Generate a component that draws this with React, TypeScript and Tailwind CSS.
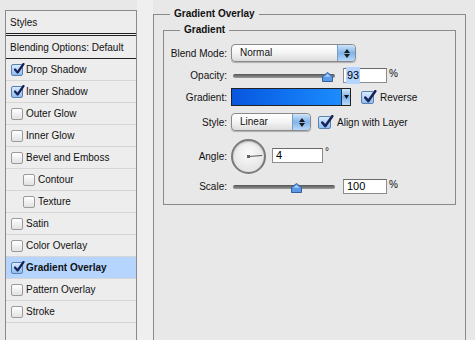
import React from 'react';

const font = { fontFamily: '"Liberation Sans", Arial, sans-serif' };

const CheckMark = ({ size = 12 }: { size?: number }) => (
  <svg width={size} height={size} viewBox="0 0 12 12" className="absolute left-[1px] -top-[2px]">
    <path d="M2 6.5 L4.6 9.5 L10.5 1" fill="none" stroke="#16225a" strokeWidth="2.2" strokeLinecap="round" strokeLinejoin="round" />
  </svg>
);

const Box = ({ checked, big }: { checked?: boolean; big?: boolean }) => (
  <span
    className={`relative shrink-0 rounded-[2px] border ${big ? 'w-[13px] h-[13px]' : 'w-[12px] h-[12px]'} ${
      checked ? 'border-[#5a7fb0] bg-gradient-to-b from-[#d9ebff] to-[#8fbdf0]' : 'border-[#9a9a9a] bg-gradient-to-b from-white to-[#e2e2e2]'
    }`}
  >
    {checked && <CheckMark size={big ? 14 : 12} />}
  </span>
);

const styleRows: { label: string; checked?: boolean; indent?: boolean; active?: boolean }[] = [
  { label: 'Drop Shadow', checked: true },
  { label: 'Inner Shadow', checked: true },
  { label: 'Outer Glow' },
  { label: 'Inner Glow' },
  { label: 'Bevel and Emboss' },
  { label: 'Contour', indent: true },
  { label: 'Texture', indent: true },
  { label: 'Satin' },
  { label: 'Color Overlay' },
  { label: 'Gradient Overlay', checked: true, active: true },
  { label: 'Pattern Overlay' },
  { label: 'Stroke' },
];

const Stepper = () => (
  <div className="w-[18px] h-full rounded-r-[4px] bg-gradient-to-b from-[#cfe4fb] via-[#7fb3ea] to-[#b9d9fa] border-l border-[#7a9cc4] flex flex-col items-center justify-center gap-[1px]">
    <svg width="6" height="4" viewBox="0 0 6 4"><path d="M3 0 L6 4 L0 4Z" fill="#1a1a1a" /></svg>
    <svg width="6" height="4" viewBox="0 0 6 4"><path d="M0 0 L6 0 L3 4Z" fill="#1a1a1a" /></svg>
  </div>
);

const Select = ({ value, width }: { value: string; width: string }) => (
  <div className={`${width} h-[18px] flex rounded-[4px] border border-[#8a8a8a] bg-gradient-to-b from-white via-[#f4f4f4] to-[#dcdcdc] shadow-[0_1px_1px_rgba(0,0,0,0.25)]`}>
    <span className="flex-1 pl-[8px] leading-[16px] text-[#111]">{value}</span>
    <Stepper />
  </div>
);

const Slider = ({ pos }: { pos: number }) => (
  <div className="relative w-[102px] h-[14px] flex items-center">
    <div className="w-full h-[4px] rounded-full bg-gradient-to-b from-[#555] to-[#9a9a9a]" />
    <svg width="11" height="10" viewBox="0 0 11 10" className="absolute top-[3px]" style={{ left: pos }}>
      <path d="M5.5 0.5 L10.5 4.5 L10.5 9.5 L0.5 9.5 L0.5 4.5 Z" fill="#5c9ae6" stroke="#2f5f9e" strokeWidth="1" strokeLinejoin="round" />
      <path d="M5.5 2 L8.5 4.8 L2.5 4.8 Z" fill="#a9d0ff" />
    </svg>
  </div>
);

const NumberField = ({ value, selected, width = 'w-[44px]' }: { value: string; selected?: boolean; width?: string }) => (
  <div className={`${width} h-[15px] bg-white border border-[#8c8c8c] border-t-[#6a6a6a] flex items-center pl-[2px] text-[11px] text-black`}>
    <span className={selected ? 'bg-[#b5d5ff] px-[1px]' : 'px-[1px]'}>{value}</span>
  </div>
);

const Row = ({ label, children, className = '' }: { label: string; children: React.ReactNode; className?: string }) => (
  <div className={`flex items-center ${className}`}>
    <span className="w-[67px] text-right pr-[4px] text-[#111]">{label}</span>
    {children}
  </div>
);

export default function App() {
  return (
    <div className="w-[475px] h-[340px] overflow-hidden bg-[#e8e8e8] flex text-[10px] text-[#111]" style={font}>
      {/* Styles list */}
      <div className="ml-[5px] mt-[10px] w-[132px] h-[340px] shrink-0 border border-[#8a8a8a] bg-[#ededed] flex flex-col">
        <div className="h-[25px] border-b-[3px] border-double border-[#222] pl-[4px] flex items-center">Styles</div>
        <div className="h-[23px] border-b border-[#222] pl-[4px] flex items-center">Blending Options: Default</div>
        {styleRows.map((row) => (
          <div
            key={row.label}
            className={`h-[22px] border-b border-[#d6d6d6] flex items-center gap-[3px] ${row.indent ? 'pl-[17px]' : 'pl-[5px]'} ${
              row.active ? 'bg-[#b5d5ff] font-bold' : ''
            }`}
          >
            <Box checked={row.checked} />
            <span>{row.label}</span>
          </div>
        ))}
      </div>

      <div className="w-[16px] shrink-0 bg-[#efefef]" />

      {/* Gradient Overlay group */}
      <fieldset className="mt-[8px] w-[313px] h-[345px] shrink-0 border border-[#8a8a8a] px-[9px]">
        <legend className="ml-[7px] px-[4px] font-bold leading-[12px]">Gradient Overlay</legend>
        <fieldset className="mt-[4px] border border-[#8a8a8a] pb-[10px]">
          <legend className="ml-[16px] px-[4px] font-bold leading-[12px]">Gradient</legend>
          <div className="flex flex-col pt-[8px]">
            <Row label="Blend Mode:">
              <Select value="Normal" width="w-[125px]" />
            </Row>
            <Row label="Opacity:" className="mt-[6px]">
              <div className="ml-[2px]">
                <Slider pos={89} />
              </div>
              <div className="ml-[8px]">
                <NumberField value="93" selected />
              </div>
              <span className="ml-[2px] -mt-[4px]">%</span>
            </Row>
            <Row label="Gradient:" className="mt-[5px]">
              <div className="w-[120px] h-[18px] border border-[#222] flex">
                <div className="flex-1 bg-gradient-to-r from-[#0a56df] to-[#1d8cff]" />
                <div className="w-[9px] bg-gradient-to-b from-[#cfe4fb] via-[#7fb3ea] to-[#b9d9fa] border-l border-[#333] flex items-center justify-center">
                  <svg width="5" height="4" viewBox="0 0 5 4"><path d="M0 0 L5 0 L2.5 4Z" fill="#111" /></svg>
                </div>
              </div>
              <div className="ml-[10px] flex items-center gap-[6px]">
                <Box checked big />
                <span>Reverse</span>
              </div>
            </Row>
            <Row label="Style:" className="mt-[7px]">
              <Select value="Linear" width="w-[80px]" />
              <div className="ml-[7px] flex items-center gap-[6px]">
                <Box checked big />
                <span>Align with Layer</span>
              </div>
            </Row>
            <Row label="Angle:" className="mt-[8px]">
              <div className="relative w-[35px] h-[35px] rounded-full border-2 border-[#7a7a7a] bg-[radial-gradient(circle_at_50%_40%,#fbfbfb,#dcdcdc)] shadow-[inset_0_1px_2px_rgba(0,0,0,0.2)]">
                <svg width="31" height="31" viewBox="0 0 31 31" className="absolute left-0 top-0">
                  <line x1="15.5" y1="15.5" x2="29" y2="14.5" stroke="#555" strokeWidth="1" />
                  <rect x="14" y="14" width="3" height="3" fill="#666" />
                </svg>
              </div>
              <div className="ml-[6px] -mt-[2px]">
                <NumberField value="4" width="w-[51px]" />
              </div>
              <span className="ml-[2px] -mt-[10px]">°</span>
            </Row>
            <Row label="Scale:" className="mt-[5px]">
              <div className="ml-[2px]">
                <Slider pos={58} />
              </div>
              <div className="ml-[8px]">
                <NumberField value="100" />
              </div>
              <span className="ml-[2px] -mt-[4px]">%</span>
            </Row>
          </div>
        </fieldset>
      </fieldset>
    </div>
  );
}
